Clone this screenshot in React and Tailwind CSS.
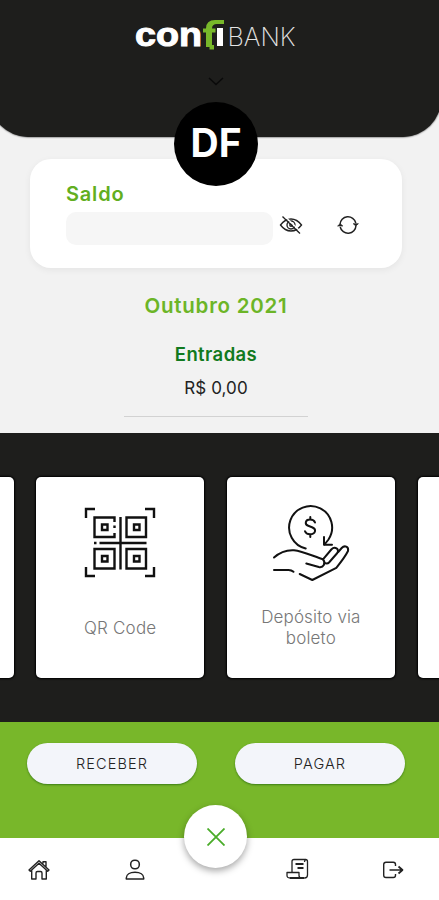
import React from "react";

const FONT = "font-['Inter','Liberation_Sans',sans-serif]";

function Logo() {
  return (
    <svg className="mt-3 ml-[134px] block h-10 w-[164px]" viewBox="134 12 164 40" fill="none">
      <g fontFamily="Liberation Sans, sans-serif">
        <text x="135" y="45.5" fontSize="33" fontWeight="700" fill="#fff" stroke="#fff" strokeWidth="1" textLength="67" lengthAdjust="spacingAndGlyphs">con</text>
      </g>
      <path d="M224 20v4h-7q-5 0-5 4.500h3.500v4H212V45h2v4.500h-4.500V47H206V32.500h-3v-4h3q0-8.500 9-8.500z" fill="#78b82a" />
      <path d="M217 28h6v18h-6z" fill="#fff" />
      <g fontFamily="Inter, sans-serif">
        <text x="227.500" y="46" fontSize="25" fontWeight="200" fill="#e4e4e4" textLength="68" lengthAdjust="spacingAndGlyphs">BANK</text>
      </g>
    </svg>
  );
}

function EyeOff() {
  return (
    <svg className="block h-[20px] w-[24px]" viewBox="0 0 24 20" fill="none" stroke="#222" strokeWidth="1.35">
      <path d="M1.500 10Q6 4 12 4t10.500 6Q18 16 12 16T1.500 10Z" />
      <circle cx="12" cy="10" r="4" />
      <circle cx="12" cy="10" r="1.200" />
      <path d="m3.500 1.500 17.500 17" />
      <path d="m5 .5 17 16.500" stroke="#fff" />
    </svg>
  );
}

function Refresh() {
  return (
    <svg className="block h-[20px] w-[22px]" viewBox="0 0 22 20" fill="none" stroke="#222" strokeWidth="1.500">
      <path d="M3 9.500a8 8 0 0 1 15.800-1.500M19 10.500A8 8 0 0 1 3.200 12" />
      <path d="m.6 11 2.600-2.300L5.800 11zM16.200 8.700l2.600 2.300 2.600-2.300z" fill="#222" strokeWidth=".7" />
    </svg>
  );
}

function QrIcon() {
  return (
    <svg className="block h-[72px] w-[72px]" viewBox="0 0 72 72" fill="none" stroke="#111" strokeWidth="2.400">
      <path d="M2 11V2h9M61 2h9v9M2 60v9h9M61 69h9v-9" />
      <path d="M30.500 15v-4.500H10.500V30h20v-4M30.500 18.500v2.500" />
      <path d="M42.500 10.500H62V30H42.500zM10.500 42h20v19.500h-20zM42.500 42H62v19.500H42.500z" />
      <path d="M18 17.500h5.500V23H18zM50 17.500h5.500V23H50zM18 49h5.500v5.500H18zM50 49h5.500v5.500H50z" />
      <path d="M36.500 10v52.500M15.500 36H62.500M10 36h2.500" />
    </svg>
  );
}

function DepositIcon() {
  return (
    <svg className="block h-[78px] w-[78px]" viewBox="0 0 78 78" fill="none" stroke="#111" strokeWidth="2" strokeLinecap="round" strokeLinejoin="round">
      <path d="M33.700 44.500A21.500 21.500 0 1 1 56.500 35.500l-4 5" />
      <path d="M52 33v7.700h8" />
      <path d="M43 18.500q-1-3-5-3c-5 0-5.500 5-1.800 6.300l3.800 1.400c5 2 3.500 7-2 7q-4 0-5-3M38.300 13v2.500M38.300 30.500V33" />
      <path d="M2 53.500c6-5.500 12-7.800 20-7.300 8 .8 19 5.800 29 9.100M2 66h14.500q3 0 5 1.800M27.700 70l12.600 6 24-12.200C69 58 73 53 76 47c1-4.500-3.500-6-6.300-3l-3.500 4" />
      <path d="m51 55.300 8.300-9.800c3.500-3.700 8.500-.5 6 3.500L57 58.500q-1.500 1.500-4.500.5M51 55.300q2.500 3 .8 5.700-1.500 2.700-5 2L34.300 59.500" />
    </svg>
  );
}

function HomeIcon() {
  return (
    <svg className="block size-[22px]" viewBox="0 0 22 22" fill="none" stroke="#222" strokeWidth="1.400" strokeLinejoin="round">
      <path d="M1 11 11 1.700 21 11l-1.300 1.300L11 4.300l-8.700 8zM3.700 11v9H8v-6q0-1.500 1.500-1.500h3q1.500 0 1.500 1.500v6h4.300v-9M15 4.500V2.700h3v5" />
    </svg>
  );
}

function UserIcon() {
  return (
    <svg className="block size-[22px]" viewBox="0 0 22 22" fill="none" stroke="#222" strokeWidth="1.500" strokeLinejoin="round">
      <rect x="6.700" y="1.200" width="8.600" height="8.600" rx="4" />
      <path d="M2.300 20v-1c0-3.500 3.500-5.700 8.700-5.700s8.700 2.200 8.700 5.700v1z" />
    </svg>
  );
}

function StatementIcon() {
  return (
    <svg className="block size-[24px]" viewBox="0 0 24 24" fill="none" stroke="#222" strokeWidth="1.300" strokeLinejoin="round">
      <path d="M7 15V4.500Q7 2.500 9 2.500h12q-1.500.5-1.500 2.500M9 2.500h11.500q2 0 2 2V18q0 3-3 3M5 21q-3 0-3-2.500V15.500h12v3q0 2.500 3 2.500" />
      <path d="M10.500 7h8M12.500 11h6" strokeWidth="1.800" />
      <path d="M5 21h14.500" strokeWidth="2" />
    </svg>
  );
}

function ExitIcon() {
  return (
    <svg className="block size-[22px]" viewBox="0 0 22 22" fill="none" stroke="#222" strokeWidth="1.400" strokeLinejoin="round">
      <path d="M13.500 7V5.500q0-2.200-2.200-2.200H4Q1.700 3.300 1.700 5.500v10.700q0 2.300 2.300 2.300h7.300q2.200 0 2.200-2.300V15" />
      <path d="M7.500 11H20M16.500 7.500 20.500 11l-4 3.500" strokeWidth="1.700" />
    </svg>
  );
}

function Card({ children }) {
  return (
    <div className="h-[201px] w-[168px] shrink-0 rounded-[5px] bg-white shadow-[0_0_2px_1px_#000]">
      {children}
    </div>
  );
}

function PillButton({ children }) {
  return (
    <button className="h-[41px] w-[170px] rounded-full bg-[#f3f5fa] text-[14.5px] font-light tracking-[1.1px] text-[#222] shadow-[0_1px_2px_rgba(0,70,0,0.5)]">
      {children}
    </button>
  );
}

export default function App() {
  return (
    <div className={`flex h-[900px] w-[439px] flex-col overflow-hidden bg-[#f2f2f2] ${FONT}`}>
      <header className="-mr-[2px] -ml-[10px] h-[137px] shrink-0 rounded-b-[38px] bg-[#1e1e1c] pl-[10px] shadow-[0_0_2px_#000]">
        <div className="flow-root">
          <Logo />
          <svg className="mt-[25px] ml-[208px] block h-[9px] w-4" viewBox="0 0 16 9" fill="none" stroke="#0a0a0a" strokeWidth="1.500">
            <path d="m1 1 7 6.500L15 1" />
          </svg>
        </div>
      </header>

      <main className="flex h-[296px] shrink-0 flex-col">
        <section className="relative mt-[22px] ml-[30px] h-[109px] w-[372px] rounded-[21px] bg-white pt-[23px] pl-9 shadow-[0_2px_7px_rgba(0,0,0,0.06)]">
          <div className="absolute -top-[57px] left-[144px] flex size-[84px] items-center justify-center rounded-full bg-black pb-[3px]">
            <span className="text-[39px] leading-none font-bold text-white">DF</span>
          </div>
          <h2 className="h-[26px] text-[20px] leading-6 font-semibold tracking-[0.8px] text-[#62ae20]">Saldo</h2>
          <div className="mt-[4px] flex h-[33px] items-start">
            <div className="h-[33px] w-[207px] rounded-[10px] bg-[#f6f6f6]" />
            <div className="mt-[3px] ml-[6px]"><EyeOff /></div>
            <div className="mt-[3px] ml-[34px]"><Refresh /></div>
          </div>
        </section>
        <section className="flex w-[432px] flex-col items-center">
          <h1 className="mt-[24px] text-[20.5px] leading-7 font-semibold tracking-[0.75px] text-[#6cb527]">Outubro 2021</h1>
          <h2 className="mt-[22px] text-[18.5px] leading-6 font-semibold tracking-[0.4px] text-[#117a20]">Entradas</h2>
          <p className="mt-[10px] text-[17px] leading-6 tracking-[0.1px] text-[#222]">R$ 0,00</p>
          <div className="mt-[16px] h-[1px] w-[184px] bg-[#d2d2d2]" />
        </section>
      </main>

      <section className="flex h-[289px] shrink-0 gap-[22.7px] overflow-hidden bg-[#1e1e1c] pt-[44px]">
        <div className="-ml-[154.500px] shrink-0"><Card /></div>
        <Card>
          <div className="flex flex-col items-center pt-[30px]">
            <QrIcon />
            <p className="mt-[38px] text-[17px] leading-[22px] font-light tracking-[0.2px] text-[#777]">QR Code</p>
          </div>
        </Card>
        <Card>
          <div className="flex flex-col items-center pt-[27px]">
            <DepositIcon />
            <p className="mt-[25px] text-center text-[17px] leading-[21px] font-light tracking-[0.15px] text-[#777]">Depósito via<br />boleto</p>
          </div>
        </Card>
        <Card />
      </section>

      <section className="flex h-[116px] shrink-0 gap-[38px] bg-[#78b72a] pt-[21px] pl-[27px]">
        <PillButton>RECEBER</PillButton>
        <PillButton>PAGAR</PillButton>
      </section>

      <nav className="relative h-[62px] shrink-0 bg-white">
        <div className="flex items-start pt-[21px] pl-[28px]">
          <HomeIcon />
          <div className="ml-[74px]"><UserIcon /></div>
          <div className="-mt-[2px] ml-[139px]"><StatementIcon /></div>
          <div className="ml-[73px]"><ExitIcon /></div>
        </div>
        <button className="absolute -top-[33px] left-[184px] flex size-[63px] items-center justify-center rounded-full bg-white shadow-[0_3px_7px_rgba(0,0,0,0.35)]">
          <svg className="size-[18px]" viewBox="0 0 18 18" fill="none" stroke="#4aac29" strokeWidth="1.800"><path d="m.5.5 17 17M17.500.5l-17 17" /></svg>
        </button>
      </nav>
    </div>
  );
}
